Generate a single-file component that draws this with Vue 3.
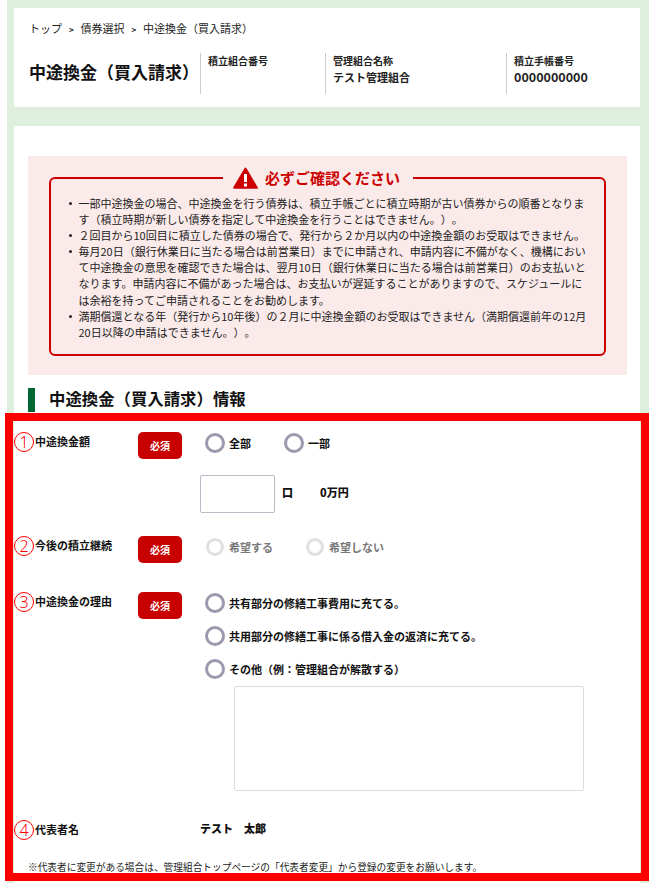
<template>
  <div class="page">
    <div class="sheet">
      <section class="card head-card">
        <nav class="crumbs">
          <span>トップ</span><i>&gt;</i><span>債券選択</span><i>&gt;</i><span>中途換金（買入請求）</span>
        </nav>
        <div class="head-row">
          <h1>中途換金（買入請求）</h1>
          <div v-for="info in infos" :key="info.label" class="info" :style="{ width: info.width + 'px' }">
            <div class="info-label">{{ info.label }}</div>
            <div class="info-value" :class="{ digits: info.digits }">{{ info.value }}</div>
          </div>
        </div>
      </section>

      <section class="card main-card">
        <div class="notice">
          <div class="notice-box">
            <div class="notice-title">
              <svg width="25" height="22" viewBox="0 0 25 22">
                <path d="M12.500 1.500 L23.800 20.800 H1.200 Z" fill="#cc0000" stroke="#cc0000" stroke-width="2" stroke-linejoin="round" />
                <rect x="11" y="7" width="3" height="8" fill="#fff" />
                <rect x="11" y="16.500" width="3" height="3" fill="#fff" />
              </svg>
              <span>必ずご確認ください</span>
            </div>
            <ul>
              <li>一部中途換金の場合、中途換金を行う債券は、積立手帳ごとに積立時期が古い債券からの順番となります（積立時期が新しい債券を指定して中途換金を行うことはできません。）。</li>
              <li>２回目から10回目に積立した債券の場合で、発行から２か月以内の中途換金額のお受取はできません。</li>
              <li>毎月20日（銀行休業日に当たる場合は前営業日）までに申請され、申請内容に不備がなく、機構において中途換金の意思を確認できた場合は、翌月10日（銀行休業日に当たる場合は前営業日）のお支払いとなります。申請内容に不備があった場合は、お支払いが遅延することがありますので、スケジュールには余裕を持ってご申請されることをお勧めします。</li>
              <li>満期償還となる年（発行から10年後）の２月に中途換金額のお受取はできません（満期償還前年の12月20日以降の申請はできません。）。</li>
            </ul>
          </div>
        </div>

        <h2>中途換金（買入請求）情報</h2>

        <div class="form">
          <div class="row row-amount">
            <span class="num">1</span>
            <div class="label">中途換金額</div>
            <span class="badge">必須</span>
            <div class="field">
              <div class="radios">
                <label class="radio"><span class="dot"></span>全部</label>
                <label class="radio"><span class="dot"></span>一部</label>
              </div>
              <div class="amount">
                <div class="amount-input"></div>
                <b class="unit">口</b>
                <b class="yen">0万円</b>
              </div>
            </div>
          </div>

          <div class="row row-continue">
            <span class="num">2</span>
            <div class="label">今後の積立継続</div>
            <span class="badge">必須</span>
            <div class="field">
              <div class="radios off">
                <label class="radio"><span class="dot"></span>希望する</label>
                <label class="radio"><span class="dot"></span>希望しない</label>
              </div>
            </div>
          </div>

          <div class="row row-reason">
            <span class="num">3</span>
            <div class="label">中途換金の理由</div>
            <span class="badge">必須</span>
            <div class="field">
              <div class="reasons">
                <label v-for="r in reasons" :key="r" class="radio"><span class="dot"></span>{{ r }}</label>
              </div>
              <div class="reason-text"></div>
            </div>
          </div>

          <div class="row row-name">
            <span class="num">4</span>
            <div class="label name-label">代表者名</div>
            <b class="name">テスト　太郎</b>
          </div>
        </div>

        <p class="note">※代表者に変更がある場合は、管理組合トップページの「代表者変更」から登録の変更をお願いします。</p>
      </section>
    </div>

    <div class="marker"></div>
  </div>
</template>

<script setup>
const infos = [
  { label: '積立組合番号', value: '', width: 125 },
  { label: '管理組合名称', value: 'テスト管理組合', width: 181 },
  { label: '積立手帳番号', value: '0000000000', width: 100, digits: true }
]

const reasons = [
  '共有部分の修繕工事費用に充てる。',
  '共用部分の修繕工事に係る借入金の返済に充てる。',
  'その他（例：管理組合が解散する）'
]
</script>

<style>
body {
  background: #fff;
}
</style>

<style scoped>
.page {
  position: relative;
  width: 650px;
  height: 883px;
  overflow: hidden;
  box-sizing: border-box;
  padding: 0 1px 0 7px;
  background: #fff;
  font-family: "Noto Sans CJK JP", "Liberation Sans", sans-serif;
  font-size: 11px;
  color: #222;
  text-spacing-trim: space-all;
}

.sheet {
  height: 100%;
  box-sizing: border-box;
  padding: 8px 9px 0 7px;
  background: #dfefde;
}

.card {
  background: #fff;
}

.head-card {
  height: 99px;
  box-sizing: border-box;
  padding: 13px 15px 0;
}

.crumbs {
  display: flex;
  align-items: center;
  height: 14px;
  font-size: 11px;
}

.crumbs i {
  width: 18.500px;
  font-style: normal;
  font-size: 8px;
  font-weight: 700;
  text-align: center;
  margin-top: 3px;
}

.head-row {
  display: flex;
  margin-top: 18px;
}

h1 {
  margin: 0;
  width: 171px;
  font-size: 17px;
  line-height: 38px;
  color: #111;
  white-space: nowrap;
}

.info {
  height: 41px;
  box-sizing: border-box;
  padding-left: 7px;
  border-left: 1px solid #ccc;
  font-size: 10px;
  font-weight: 700;
  line-height: 14px;
}

.info-label {
  margin-top: 1px;
}

.info-value {
  margin-top: 1px;
  font-size: 11px;
  line-height: 16px;
}

.digits {
  font-size: 12.500px;
}

.main-card {
  margin-top: 19px;
  height: 760px;
  padding: 30px 13px 0 14px;
}

.notice {
  height: 219px;
  box-sizing: border-box;
  padding: 21px 21px 0;
  background: #fbeaea;
}

.notice-box {
  position: relative;
  height: 178.500px;
  box-sizing: border-box;
  padding: 16px 14.500px 0 18.500px;
  border: 2px solid #cc0000;
  border-radius: 6px;
}

.notice-title {
  position: absolute;
  top: -13.500px;
  left: 172px;
  display: flex;
  align-items: center;
  gap: 7px;
  padding: 0 13px 0 10px;
  background: #fbeaea;
  color: #cc0000;
  font-size: 15px;
  font-weight: 700;
  line-height: 24px;
}

ul {
  margin: 0;
  padding: 0 0 0 9px;
  list-style: none;
  line-height: 16.100px;
  color: #222;
}

li {
  position: relative;
}

li::before {
  content: "";
  position: absolute;
  left: -10px;
  top: 7px;
  width: 3px;
  height: 3px;
  border-radius: 50%;
  background: #222;
}

h2 {
  margin: 13px 0 0;
  padding-left: 14px;
  border-left: 7px solid #006633;
  height: 24px;
  font-size: 16.400px;
  line-height: 20px;
  color: #111;
}

.form {
  margin-top: 20px;
  font-weight: 700;
  color: #111;
}

.row {
  position: relative;
  display: flex;
  padding-left: 7px;
}

.row-amount {
  height: 104px;
}

.row-continue {
  height: 56px;
}

.row-reason {
  height: 228px;
}

.num {
  position: absolute;
  left: -14px;
  top: 0;
  width: 18px;
  height: 18px;
  border: 1px solid #f00;
  border-radius: 50%;
  color: #f00;
  font-family: "Noto Sans", sans-serif;
  font-weight: 300;
  font-size: 16px;
  line-height: 18px;
  text-align: center;
}

.label {
  width: 103px;
  line-height: 18px;
}

.badge {
  width: 44px;
  height: 27px;
  border-radius: 5px;
  background: #c80000;
  color: #fff;
  font-size: 10px;
  line-height: 27px;
  text-align: center;
}

.radios,
.reasons {
  display: flex;
  margin: 1px 0 0 23px;
}

.radios {
  gap: 33px;
}

.reasons {
  flex-direction: column;
  gap: 13px;
}

.radio {
  display: flex;
  align-items: center;
  gap: 4px;
  height: 20px;
  white-space: nowrap;
}

.dot {
  width: 20px;
  height: 20px;
  box-sizing: border-box;
  border: 3px solid #9a9aad;
  border-radius: 50%;
  background: #fff;
}

.off {
  gap: 32px;
  color: #777;
}

.off .radio {
  gap: 5px;
}

.off .dot {
  width: 18px;
  height: 18px;
  margin-left: 1px;
  border-color: #e0e0e4;
}

.amount {
  display: flex;
  align-items: center;
  margin: 22px 0 0 18px;
}

.amount-input {
  width: 73px;
  height: 36px;
  border: 1px solid #bbbbc8;
  border-radius: 2px;
}

.unit {
  width: 38px;
  margin: 0 0 4px 7px;
}

.yen {
  margin-bottom: 4px;
}

.reason-text {
  width: 348px;
  height: 103px;
  margin: 7px 0 0 52px;
  border: 1px solid #ddd;
  border-radius: 2px;
}

.name-label {
  width: 165px;
}

.row-name {
  height: 40px;
  line-height: 17px;
}

.note {
  margin: 0;
  font-size: 9.700px;
  line-height: 14px;
  white-space: nowrap;
}

.marker {
  position: absolute;
  left: 5px;
  top: 413px;
  width: 644px;
  height: 468px;
  box-sizing: border-box;
  border: 8px solid #f00;
  pointer-events: none;
}
</style>
